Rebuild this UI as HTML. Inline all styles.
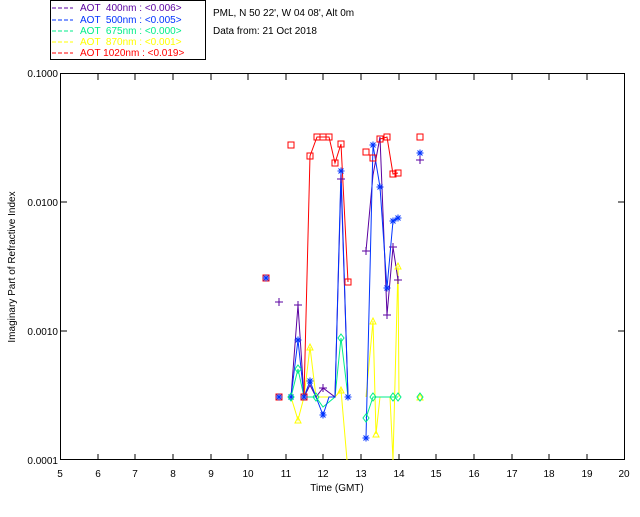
<!DOCTYPE html>
<html><head><style>
body{margin:0;background:#fff;width:640px;height:512px;overflow:hidden;font-family:"Liberation Sans",sans-serif}
svg text{font-family:"Liberation Sans",sans-serif;font-size:10px;white-space:pre}
</style></head><body>
<svg width="640" height="512" viewBox="0 0 640 512">
<defs>
<g id="ast" stroke="#0033ff" stroke-width="1"><path d="M-3.5 0h7M0-3.5v7M-2.5-2.5l5 5M-2.5 2.5l5-5"/></g>
<g id="pl" stroke="#5a00a0" stroke-width="1"><path d="M-4 0h8M0-4v8"/></g>
</defs>
<rect x="50.5" y="0.5" width="155" height="59" fill="none" stroke="#000"/>
<g font-size="10">
<line x1="52" y1="8" x2="73" y2="8" stroke="#5a00a0" stroke-dasharray="4,2"/><text x="80" y="11" fill="#5a00a0" xml:space="preserve">AOT  400nm : &lt;0.006&gt;</text>
<line x1="52" y1="20" x2="73" y2="20" stroke="#0033ff" stroke-dasharray="4,2"/><text x="80" y="23" fill="#0033ff" xml:space="preserve">AOT  500nm : &lt;0.005&gt;</text>
<line x1="52" y1="31" x2="73" y2="31" stroke="#00ee88" stroke-dasharray="4,2"/><text x="80" y="34" fill="#00ee88" xml:space="preserve">AOT  675nm : &lt;0.000&gt;</text>
<line x1="52" y1="42" x2="73" y2="42" stroke="#ffff00" stroke-dasharray="4,2"/><text x="80" y="45" fill="#ffff00" xml:space="preserve">AOT  870nm : &lt;0.001&gt;</text>
<line x1="52" y1="53" x2="73" y2="53" stroke="#ff0000" stroke-dasharray="4,2"/><text x="80" y="56" fill="#ff0000" xml:space="preserve">AOT 1020nm : &lt;0.019&gt;</text>
</g>
<text x="213" y="16" fill="#000">PML, N 50 22', W 04 08', Alt 0m</text>
<text x="213" y="34" fill="#000">Data from: 21 Oct 2018</text>
<rect x="60.5" y="73.5" width="564" height="386" fill="none" stroke="#000"/>
<g stroke="#000">
<path d="M98 74v6M135 74v6M173 74v6M211 74v6M248 74v6M286 74v6M323 74v6M361 74v6M399 74v6M436 74v6M474 74v6M512 74v6M549 74v6M587 74v6
M98 460v-6M135 460v-6M173 460v-6M211 460v-6M248 460v-6M286 460v-6M323 460v-6M361 460v-6M399 460v-6M436 460v-6M474 460v-6M512 460v-6M549 460v-6M587 460v-6
M61 202h6M61 331h6M624 202h-6M624 331h-6"/>
</g>
<g text-anchor="end" font-size="10">
<text x="58" y="77">0.1000</text><text x="58" y="206">0.0100</text><text x="58" y="335">0.0010</text><text x="58" y="464">0.0001</text>
</g>
<g text-anchor="middle" font-size="10">
<text x="60" y="477">5</text><text x="98" y="477">6</text><text x="135" y="477">7</text><text x="173" y="477">8</text><text x="211" y="477">9</text><text x="248" y="477">10</text><text x="286" y="477">11</text><text x="323" y="477">12</text><text x="361" y="477">13</text><text x="399" y="477">14</text><text x="436" y="477">15</text><text x="474" y="477">16</text><text x="512" y="477">17</text><text x="549" y="477">18</text><text x="587" y="477">19</text><text x="624" y="477">20</text>
<text x="337" y="491">Time (GMT)</text>
<text transform="translate(15,267) rotate(-90)">Imaginary Part of Refractive Index</text>
</g>
<g fill="none">
<polyline stroke="#ffff00" points="291,397 298,420 304,397 310,347 316,397 335,397 341,390 347,460"/>
<polyline stroke="#ffff00" points="366,397 373,321 376,434 380,397 390,397 393,460 398,266 399,397"/>
<polyline stroke="#00ee88" points="291,397 298,369 304,397 316,397 323,407 335,397 341,338 348,397"/>
<polyline stroke="#00ee88" points="366,418 373,397 393,397 398,397"/>
<polyline stroke="#5a00a0" points="291,397 298,305 304,397 310,385 316,397 323,388 335,397 341,179 348,397"/>
<polyline stroke="#5a00a0" points="366,251 373,175 380,137 387,315 393,247 398,280"/>
<polyline stroke="#0033ff" points="291,397 298,340 304,397 310,381 316,397 323,415 329,397 335,397 341,171 348,397"/>
<polyline stroke="#0033ff" points="366,438 373,145 380,187 387,288 393,221 398,218"/>
<polyline stroke="#ff0000" points="304,397 310,156 317,137 329,137 335,163 341,144 348,282"/>
<polyline stroke="#ff0000" points="380,139 387,137 393,174 398,173"/>
</g>
<g fill="none" stroke="#ff0000">
<rect x="288" y="142" width="6" height="6"/><rect x="307" y="153" width="6" height="6"/><rect x="314" y="134" width="6" height="6"/><rect x="320" y="134" width="6" height="6"/><rect x="326" y="134" width="6" height="6"/><rect x="332" y="160" width="6" height="6"/><rect x="338" y="141" width="6" height="6"/><rect x="345" y="279" width="6" height="6"/><rect x="363" y="149" width="6" height="6"/><rect x="370" y="155" width="6" height="6"/><rect x="377" y="136" width="6" height="6"/><rect x="384" y="134" width="6" height="6"/><rect x="390" y="171" width="6" height="6"/><rect x="395" y="170" width="6" height="6"/><rect x="417" y="134" width="6" height="6"/><rect x="263" y="275" width="6" height="6"/><rect x="276" y="394" width="6" height="6"/><rect x="301" y="394" width="6" height="6"/>
</g>
<use href="#ast" x="298" y="340"/><use href="#ast" x="310" y="381"/><use href="#ast" x="323" y="415"/><use href="#ast" x="341" y="171"/><use href="#ast" x="366" y="438"/><use href="#ast" x="373" y="145"/><use href="#ast" x="380" y="187"/><use href="#ast" x="387" y="288"/><use href="#ast" x="393" y="221"/><use href="#ast" x="398" y="218"/><use href="#ast" x="420" y="153"/><use href="#ast" x="291" y="397"/><use href="#ast" x="304" y="397"/><use href="#ast" x="348" y="397"/><use href="#ast" x="266" y="278"/><use href="#ast" x="279" y="397"/>
<use href="#pl" x="279" y="302"/><use href="#pl" x="298" y="305"/><use href="#pl" x="323" y="388"/><use href="#pl" x="341" y="179"/><use href="#pl" x="366" y="251"/><use href="#pl" x="387" y="315"/><use href="#pl" x="393" y="247"/><use href="#pl" x="398" y="280"/><use href="#pl" x="420" y="160"/>
<g fill="none" stroke="#ffff00">
<path d="M295 423l3-6 3 6zM307 350l3-6 3 6zM338 393l3-6 3 6zM370 324l3-6 3 6zM373 437l3-6 3 6zM395 269l3-6 3 6zM417 400l3-6 3 6z"/>
</g>
<g fill="none" stroke="#00ee88">
<path d="M298 365l3 4-3 4-3-4zM341 334l3 4-3 4-3-4zM366 414l3 4-3 4-3-4zM373 393l3 4-3 4-3-4zM393 393l3 4-3 4-3-4zM398 393l3 4-3 4-3-4zM420 393l3 4-3 4-3-4zM291 393l3 4-3 4-3-4zM316 393l3 4-3 4-3-4z"/>
</g>
</svg>
</body></html>
